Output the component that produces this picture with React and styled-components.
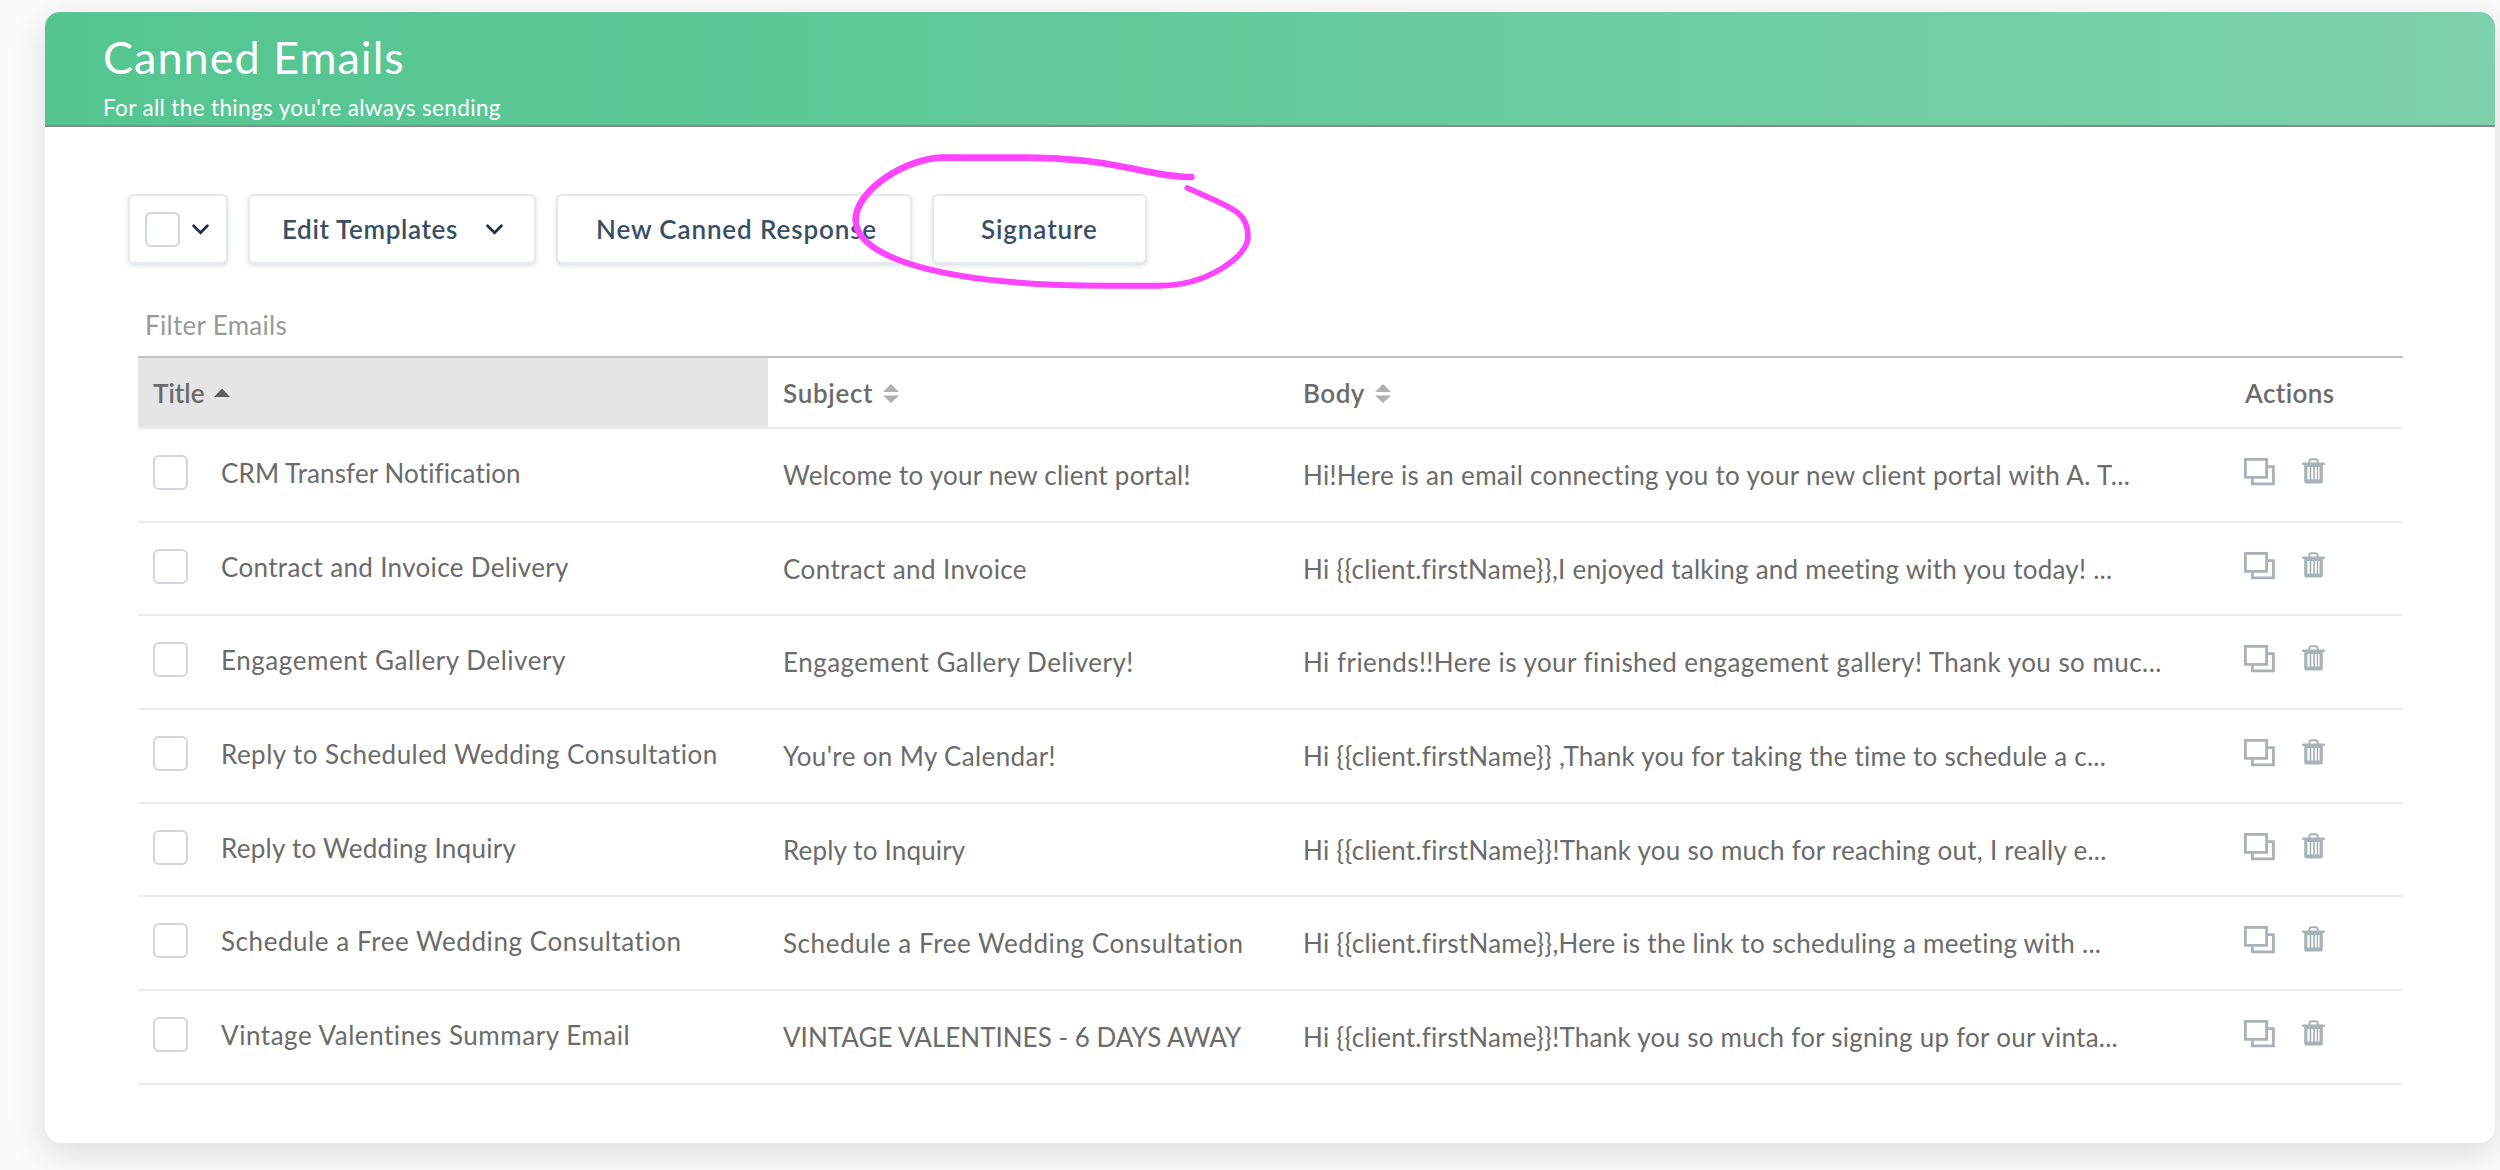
import styled, { createGlobalStyle } from "styled-components";

const emails = [
  {
    title: ["CRM Transfer Notification", 0.11],
    subject: ["Welcome to your new client portal!", 0.24],
    body: ["Hi!Here is an email connecting you to your new client portal with A. T...", 0.32],
  },
  {
    title: ["Contract and Invoice Delivery", 0.34],
    subject: ["Contract and Invoice", 0.4],
    body: ["Hi {{client.firstName}},I enjoyed talking and meeting with you today! ...", 0.24],
  },
  {
    title: ["Engagement Gallery Delivery", 0.55],
    subject: ["Engagement Gallery Delivery!", 0.49],
    body: ["Hi friends!!Here is your finished engagement gallery! Thank you so muc...", 0.45],
  },
  {
    title: ["Reply to Scheduled Wedding Consultation", 0.46],
    subject: ["You're on My Calendar!", 0.36],
    body: ["Hi {{client.firstName}} ,Thank you for taking the time to schedule a c...", 0.25],
  },
  {
    title: ["Reply to Wedding Inquiry", 0.27],
    subject: ["Reply to Inquiry", 0.17],
    body: ["Hi {{client.firstName}}!Thank you so much for reaching out, I really e...", 0.26],
  },
  {
    title: ["Schedule a Free Wedding Consultation", 0.56],
    subject: ["Schedule a Free Wedding Consultation", 0.56],
    body: ["Hi {{client.firstName}},Here is the link to scheduling a meeting with ...", 0.26],
  },
  {
    title: ["Vintage Valentines Summary Email", 0.54],
    subject: ["VINTAGE VALENTINES - 6 DAYS AWAY", 0],
    body: ["Hi {{client.firstName}}!Thank you so much for signing up for our vinta...", 0.25],
  },
];

export default function App() {
  return (
    <>
      <GlobalStyle />
      <Card>
        <Header>
          <h1>Canned Emails</h1>
          <p>For all the things you're always sending</p>
        </Header>
        <Toolbar>
          <SelectButton>
            <Checkbox />
            <Chevron />
          </SelectButton>
          <EditButton>
            <Label $track={0.65}>Edit Templates</Label>
            <Chevron />
          </EditButton>
          <NewButton>
            <Label $track={0.88}>New Canned Response</Label>
          </NewButton>
          <SignatureButton>
            <Label $track={0.9}>Signature</Label>
          </SignatureButton>
          <Circle />
        </Toolbar>
        <Filter placeholder="Filter Emails" />
        <Table>
          <HeadRow>
            <HeadCell $active>
              <Label $track={0}>Title</Label>
              <SortUp />
            </HeadCell>
            <HeadCell>
              <Label $track={0.7}>Subject</Label>
              <SortBoth />
            </HeadCell>
            <HeadCell>
              <Label $track={0.5}>Body</Label>
              <SortBoth />
            </HeadCell>
            <HeadCell>
              <Label $track={0.4}>Actions</Label>
            </HeadCell>
          </HeadRow>
          {emails.map((email, i) => (
            <Row key={i}>
              <TitleCell>
                <Checkbox />
                <Label $track={email.title[1]}>{email.title[0]}</Label>
              </TitleCell>
              <Cell>
                <Label $track={email.subject[1]}>{email.subject[0]}</Label>
              </Cell>
              <Cell>
                <Label $track={email.body[1]}>{email.body[0]}</Label>
              </Cell>
              <ActionCell>
                <CopyIcon />
                <TrashIcon />
              </ActionCell>
            </Row>
          ))}
        </Table>
      </Card>
    </>
  );
}

function Chevron() {
  return (
    <svg width="17" height="11" viewBox="0 0 17 11" fill="none">
      <path d="M1.6 1.8L8.5 8.8L15.4 1.8" stroke="#1c3149" strokeWidth="2.7" strokeLinecap="round" />
    </svg>
  );
}

function SortUp() {
  return (
    <svg width="16" height="18" viewBox="0 0 16 18">
      <path d="M0 13L8 4.5L16 13Z" fill="#5f5f5f" />
    </svg>
  );
}

function SortBoth() {
  return (
    <svg width="16" height="20" viewBox="0 0 16 20">
      <path d="M0 9L8 1L16 9ZM0 12.5L8 20L16 12.5Z" fill="#b0b0b0" />
    </svg>
  );
}

function CopyIcon() {
  return (
    <svg width="31" height="28" viewBox="0 0 31 28" fill="none" stroke="#a8b2bb" strokeWidth="2.8">
      <path d="M1.4 1.4H22.6V19.4H1.4Z" />
      <path d="M24 8.6H29.4V25.9H8.4V20.5" />
    </svg>
  );
}

function TrashIcon() {
  return (
    <svg width="23" height="26" viewBox="0 0 23 26">
      <path d="M7.3 5V3.6Q7.3 1.2 9.6 1.2H13.4Q15.7 1.2 15.7 3.6V5" fill="none" stroke="#a8b2bb" strokeWidth="2" />
      <rect y="4.6" width="23" height="2.4" rx="1" fill="#a8b2bb" />
      <path
        fillRule="evenodd"
        fill="#a8b2bb"
        d="M2.2 6.5H20.8V23Q20.8 25.6 18.3 25.6H4.7Q2.2 25.6 2.2 23ZM5.4 9V21.6H7.6V9ZM9.3 9V21.6H11.2V9ZM12.9 9V21.6H14.7V9ZM16.2 9V21.6H17.6V9Z"
      />
    </svg>
  );
}

// hand drawn loop round the Signature button
function Circle() {
  return (
    <Loop viewBox="0 0 1290 480">
      <path d="M1054 111C1000 111 950 101 880 86S700 53 560 53H310" strokeWidth="20" />
      <path d="M310 53C200 53 47 150 47 240" strokeWidth="20" />
      <path d="M47 240C47 350 300 437 800 437H960" strokeWidth="18" />
      <path d="M960 437C1100 437 1224 350 1224 290C1224 215 1180 205 1042 144" strokeWidth="17" />
    </Loop>
  );
}

const GlobalStyle = createGlobalStyle`
  * {
    box-sizing: border-box;
  }

  body {
    margin: 0;
    height: 1170px;
    overflow: hidden;
    background: #fbfbfb;
    font-family: Lato, "Open Sans", sans-serif;
    font-size: 26px;
    line-height: 30px;
    color: #6b6b6b;
  }

  #root {
    display: flow-root;
  }

  svg {
    display: block;
    flex: none;
  }
`;

const Card = styled.div`
  width: 2450px;
  height: 1132px;
  margin: 11px 0 0 45px;
  padding-top: 1px;
  background: white;
  border-radius: 16px;
  box-shadow: 0 10px 34px rgba(0, 0, 0, 0.13);
`;

const Header = styled.div`
  height: 115px;
  padding: 18px 58px 0;
  border-bottom: 2px solid #8b8687;
  border-radius: 15px 15px 0 0;
  background: linear-gradient(90deg, #54c591, #65cb9c 50%, #7dd1ad);
  color: white;

  h1 {
    margin: 0;
    font-size: 45px;
    font-weight: 400;
    line-height: 54px;
    letter-spacing: 1px;
  }

  p {
    margin: 10px 0 0;
    font-size: 22.5px;
    line-height: 28px;
    letter-spacing: 0.35px;
  }
`;

const Toolbar = styled.div`
  position: relative;
  display: flex;
  gap: 20px;
  margin: 67px 0 0 83px;
`;

const Button = styled.div`
  display: flex;
  align-items: center;
  height: 70px;
  border: 2px solid #e6e9ec;
  border-radius: 6px;
  background: white;
  box-shadow: 0 2px 4px rgba(40, 60, 80, 0.16);
  color: #384f66;
  font-weight: 600;
`;

const SelectButton = styled(Button)`
  width: 100px;
  padding-left: 15px;
  gap: 12px;
`;

const EditButton = styled(Button)`
  width: 288px;
  padding: 0 31px 0 32px;
  justify-content: space-between;
`;

const NewButton = styled(Button)`
  width: 356px;
  padding-left: 38px;
`;

const SignatureButton = styled(Button)`
  width: 215px;
  padding-left: 47px;
`;

const Label = styled.span`
  letter-spacing: ${(p) => p.$track}px;
  white-space: nowrap;
`;

const Checkbox = styled.div`
  flex: none;
  width: 35px;
  height: 35px;
  border: 2px solid #d0d6db;
  border-radius: 6px;
  background: white;
`;

const Loop = styled.svg`
  position: absolute;
  left: 712px;
  top: -54px;
  width: 430px;
  height: 160px;
  fill: none;
  stroke: #ff44ff;
  stroke-linecap: round;
`;

const Filter = styled.input`
  display: block;
  width: 600px;
  height: 40px;
  margin: 41px 0 11px 100px;
  padding: 0;
  border: 0;
  background: none;
  font: inherit;
  letter-spacing: 0.3px;

  &::placeholder {
    color: #999;
  }
`;

const Table = styled.div`
  width: 2265px;
  margin-left: 93px;
  border-top: 2px solid #c2c1c8;
`;

const HeadRow = styled.div`
  display: grid;
  grid-template-columns: 630px 520px 942px 1fr;
  height: 71px;
  border-bottom: 2px solid #eeebed;
`;

const HeadCell = styled.div`
  display: flex;
  align-items: center;
  gap: 10px;
  padding-left: 15px;
  background: ${(p) => (p.$active ? "#e5e5e5" : "white")};
  font-weight: 600;
`;

const Row = styled(HeadRow)`
  height: 93.7px;
`;

const Cell = styled.div`
  padding: 31px 0 0 15px;
`;

const TitleCell = styled.div`
  display: flex;
  gap: 33px;
  padding: 26px 0 0 15px;

  ${Label} {
    padding-top: 3px;
  }
`;

const ActionCell = styled.div`
  display: flex;
  gap: 27px;
  padding: 29px 0 0 14px;
`;
